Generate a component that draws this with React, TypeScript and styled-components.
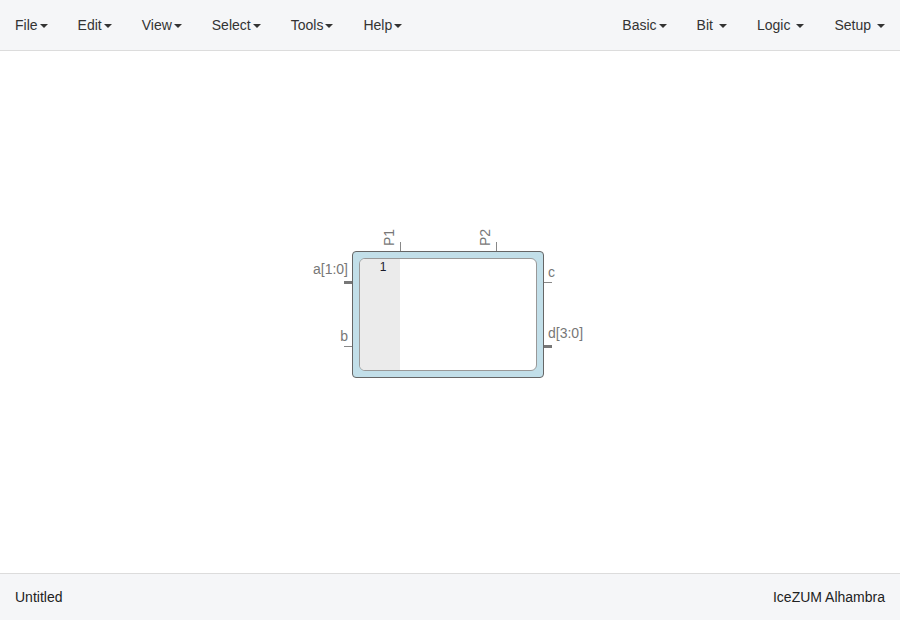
import React from "react";
import styled, { createGlobalStyle } from "styled-components";

const Global = createGlobalStyle`
  html, body { margin: 0; padding: 0; }
  body { font-family: "Liberation Sans", Arial, sans-serif; font-size: 14px; color: #333; background: #fff; }
`;

const Page = styled.div`
  display: flex;
  flex-direction: column;
  height: 620px;
  width: 900px;
  overflow: hidden;
`;

const NavBar = styled.div`
  height: 50px;
  flex: none;
  display: flex;
  justify-content: space-between;
  align-items: center;
  background: #f5f6f8;
  border-bottom: 1px solid #dcdcdc;
`;

const MenuGroup = styled.div`
  display: flex;
  align-items: center;
`;

const MenuItem = styled.div<{ $spaced?: boolean }>`
  display: flex;
  align-items: center;
  padding: 0 15px;
  height: 50px;
  color: #333;
  font-size: 14px;
  gap: ${(p) => (p.$spaced ? "6px" : "2px")};
`;

const Caret = styled.span`
  display: inline-block;
  width: 0;
  height: 0;
  border-top: 4px solid #333;
  border-left: 4px solid transparent;
  border-right: 4px solid transparent;
  margin-top: 1px;
`;

const Canvas = styled.div`
  flex: 1;
  position: relative;
  background: #fff;
`;

const Footer = styled.div`
  height: 46px;
  flex: none;
  display: flex;
  justify-content: space-between;
  align-items: center;
  padding: 0 15px;
  background: #f5f6f8;
  border-top: 1px solid #dcdcdc;
  color: #222;
  font-size: 14px;
`;

const Node = styled.div`
  position: absolute;
  left: 352px;
  top: 200px;
  width: 192px;
  height: 127px;
  box-sizing: border-box;
  border: 1px solid #666;
  border-radius: 4px;
  background: #c2dfe9;
  padding: 6px;
`;

const Inner = styled.div`
  height: 100%;
  box-sizing: border-box;
  border: 1px solid #999;
  border-radius: 6px;
  background: #fff;
  display: flex;
  overflow: hidden;
`;

const Gutter = styled.div`
  width: 40px;
  background: #ebebeb;
  display: flex;
  justify-content: center;
  padding: 1px 0 0 6px;
  font-size: 12px;
  color: #1a1a2a;
  box-sizing: border-box;
`;

const Stub = styled.div<{ $thick?: boolean; $side: "left" | "right"; $top: number }>`
  position: absolute;
  top: ${(p) => p.$top - (p.$thick ? 1 : 0)}px;
  ${(p) => (p.$side === "left" ? "left: -9px;" : "right: -9px;")}
  width: 8px;
  height: ${(p) => (p.$thick ? 3 : 1)}px;
  background: ${(p) => (p.$thick ? "#777" : "#888")};
`;

const TopStub = styled.div<{ $left: number }>`
  position: absolute;
  top: -10px;
  left: ${(p) => p.$left}px;
  width: 1px;
  height: 9px;
  background: #888;
`;

const PortLabel = styled.div<{ $side: "left" | "right"; $top: number }>`
  position: absolute;
  top: ${(p) => p.$top}px;
  ${(p) => (p.$side === "left" ? "right: 195px;" : "left: 195px;")}
  font-size: 14px;
  line-height: 16px;
  color: #777;
  white-space: nowrap;
`;

const TopLabel = styled.div<{ $left: number }>`
  position: absolute;
  top: -6px;
  left: ${(p) => p.$left}px;
  font-size: 14px;
  line-height: 12px;
  color: #777;
  white-space: nowrap;
  transform: rotate(-90deg);
  transform-origin: left top;
  width: 18px;
`;

const leftMenus: { label: string; pad?: number }[] = [
  { label: "File" },
  { label: "Edit" },
  { label: "View" },
  { label: "Select" },
  { label: "Tools" },
  { label: "Help" },
];
const rightMenus: { label: string; spaced: boolean }[] = [
  { label: "Basic", spaced: false },
  { label: "Bit", spaced: true },
  { label: "Logic", spaced: true },
  { label: "Setup", spaced: true },
];

export default function App() {
  return (
    <Page>
      <Global />
      <NavBar>
        <MenuGroup>
          {leftMenus.map((m) => (
            <MenuItem key={m.label}>
              {m.label}
              <Caret />
            </MenuItem>
          ))}
        </MenuGroup>
        <MenuGroup>
          {rightMenus.map((m) => (
            <MenuItem key={m.label} $spaced={m.spaced}>
              {m.label}
              <Caret />
            </MenuItem>
          ))}
        </MenuGroup>
      </NavBar>
      <Canvas>
        <Node>
          <Inner>
            <Gutter>1</Gutter>
          </Inner>
          <Stub $side="left" $top={30} $thick />
          <Stub $side="left" $top={94} />
          <Stub $side="right" $top={30} />
          <Stub $side="right" $top={94} $thick />
          <PortLabel $side="left" $top={9}>a[1:0]</PortLabel>
          <PortLabel $side="left" $top={76}>b</PortLabel>
          <PortLabel $side="right" $top={12}>c</PortLabel>
          <PortLabel $side="right" $top={73}>d[3:0]</PortLabel>
          <TopStub $left={47} />
          <TopStub $left={143} />
          <TopLabel $left={30}>P1</TopLabel>
          <TopLabel $left={126}>P2</TopLabel>
        </Node>
      </Canvas>
      <Footer>
        <span>Untitled</span>
        <span>IceZUM Alhambra</span>
      </Footer>
    </Page>
  );
}
